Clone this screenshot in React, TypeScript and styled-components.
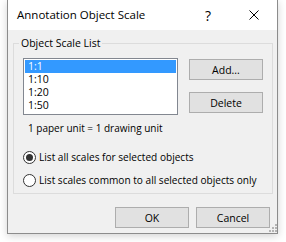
import styled, { createGlobalStyle } from 'styled-components';

const GlobalStyle = createGlobalStyle`
  html, body {
    margin: 0;
    background: #ffffff;
  }
  body {
    font-family: "Open Sans", "Noto Sans", "Liberation Sans", sans-serif;
    font-size: 10.5px;
    color: #000000;
  }
`;

const Desktop = styled.div`
  width: 286px;
  height: 242px;
  padding-left: 7px;
  box-sizing: border-box;
  overflow: hidden;
`;

const Window = styled.div`
  width: 271px;
  height: 234px;
  box-sizing: border-box;
  border: 1px solid #8c8c8c;
  border-top: none;
  background: #f0f0f0;
  box-shadow: 0 2px 8px rgba(0, 0, 0, 0.18);
  display: flex;
  flex-direction: column;
`;

const TitleBar = styled.div`
  height: 30px;
  flex: none;
  background: #ffffff;
  display: flex;
  align-items: center;
  padding-left: 9px;
`;

const Title = styled.div`
  flex: 1;
  font-size: 11.5px;
  line-height: 16px;
  margin-top: -1px;
`;

const CaptionButton = styled.div`
  width: 46px;
  height: 30px;
  display: flex;
  align-items: center;
  justify-content: center;
  font-size: 14px;
`;

const Body = styled.div`
  flex: 1;
  display: flex;
  flex-direction: column;
  padding: 5px 7px 5px 5px;
`;

const Group = styled.fieldset`
  margin: 0 -3px 0 0;
  padding: 7px 9px 0 9px;
  height: 159px;
  box-sizing: border-box;
  border: 1px solid #dcdcdc;
  min-width: 0;
  display: flex;
  flex-direction: column;
`;

const Legend = styled.legend`
  padding: 0 2px;
  margin-left: -4px;
  line-height: 16px;
`;

const ListRow = styled.div`
  display: flex;
  gap: 11px;
`;

const ListBox = styled.div`
  width: 155px;
  height: 57px;
  box-sizing: border-box;
  border: 1px solid #828790;
  background: #ffffff;
  padding: 1px;
`;

const ListItem = styled.div<{ $selected?: boolean }>`
  height: 13px;
  line-height: 13px;
  padding-left: 3px;
  background: ${(p) => (p.$selected ? '#3399ff' : 'transparent')};
  color: ${(p) => (p.$selected ? '#ffffff' : '#000000')};
`;

const ButtonColumn = styled.div`
  display: flex;
  flex-direction: column;
  gap: 12px;
  padding-top: 1px;
`;

const Button = styled.div`
  width: 74px;
  height: 21px;
  box-sizing: border-box;
  border: 1px solid #adadad;
  background: #e1e1e1;
  display: flex;
  align-items: center;
  justify-content: center;
  line-height: 16px;
`;

const InfoText = styled.div`
  margin: 5px 0 0 5px;
  line-height: 16px;
  font-size: 10px;
`;

const RadioList = styled.div`
  display: flex;
  flex-direction: column;
  gap: 7px;
  margin-top: 13px;
`;

const RadioRow = styled.div`
  display: flex;
  align-items: center;
  gap: 3px;
  height: 16px;
  line-height: 16px;
  font-size: 10.1px;
  white-space: nowrap;
`;

const RadioCircle = styled.div<{ $checked?: boolean }>`
  width: 13px;
  height: 13px;
  flex: none;
  box-sizing: border-box;
  border-radius: 50%;
  border: 1px solid #333333;
  background: #ffffff;
  display: flex;
  align-items: center;
  justify-content: center;

  &::after {
    content: '';
    width: 7px;
    height: 7px;
    border-radius: 50%;
    background: ${(p) => (p.$checked ? '#333333' : 'transparent')};
  }
`;

const FooterWrap = styled.div`
  position: relative;
  margin-top: auto;
`;

const Footer = styled.div`
  display: flex;
  justify-content: flex-end;
  gap: 7px;
`;

const Grip = styled.svg`
  position: absolute;
  right: -7px;
  bottom: -4px;
`;

const scales = ['1:1', '1:10', '1:20', '1:50'];

export default function App() {
  return (
    <>
      <GlobalStyle />
      <Desktop>
        <Window>
          <TitleBar>
            <Title>Annotation Object Scale</Title>
            <CaptionButton>?</CaptionButton>
            <CaptionButton>
              <svg width="10" height="10" viewBox="0 0 10 10">
                <path d="M0.5 0.5 L9.5 9.5 M9.5 0.5 L0.5 9.5" stroke="#000" strokeWidth="1" />
              </svg>
            </CaptionButton>
          </TitleBar>
          <Body>
            <Group>
              <Legend>Object Scale List</Legend>
              <ListRow>
                <ListBox>
                  {scales.map((s, i) => (
                    <ListItem key={s} $selected={i === 0}>
                      {s}
                    </ListItem>
                  ))}
                </ListBox>
                <ButtonColumn>
                  <Button>Add...</Button>
                  <Button>Delete</Button>
                </ButtonColumn>
              </ListRow>
              <InfoText>1 paper unit = 1 drawing unit</InfoText>
              <RadioList>
                <RadioRow>
                  <RadioCircle $checked />
                  List all scales for selected objects
                </RadioRow>
                <RadioRow>
                  <RadioCircle />
                  List scales common to all selected objects only
                </RadioRow>
              </RadioList>
            </Group>
            <FooterWrap>
              <Footer>
                <Button>OK</Button>
                <Button>Cancel</Button>
              </Footer>
              <Grip width="8" height="8" viewBox="0 0 8 8">
                <g fill="#b4b4b4">
                  <rect x="6" y="0" width="2" height="2" />
                  <rect x="3" y="3" width="2" height="2" />
                  <rect x="6" y="3" width="2" height="2" />
                  <rect x="0" y="6" width="2" height="2" />
                  <rect x="3" y="6" width="2" height="2" />
                  <rect x="6" y="6" width="2" height="2" />
                </g>
              </Grip>
            </FooterWrap>
          </Body>
        </Window>
      </Desktop>
    </>
  );
}
